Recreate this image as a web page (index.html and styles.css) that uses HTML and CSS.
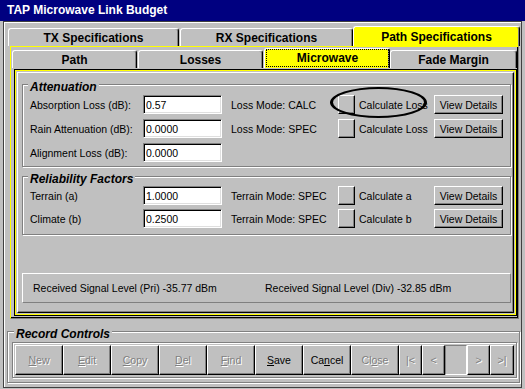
FILE: index.html
```html
<!DOCTYPE html>
<html lang="en">
<head>
  <meta charset="UTF-8" />
  <title>TAP Microwave Link Budget</title>
  <link rel="stylesheet" href="styles.css">
</head>
<body>
  <div class="titlebar">TAP Microwave Link Budget</div>

  <div class="window">
    <div class="tabs outer-tabs">
      <div class="tab tab-tx">TX Specifications</div>
      <div class="tab tab-rx">RX Specifications</div>
      <div class="tab tab-path is-active">Path Specifications</div>
    </div>

    <div class="page">
      <div class="tabs sub-tabs">
        <div class="tab sub-path">Path</div>
        <div class="tab sub-losses">Losses</div>
        <div class="tab sub-mw is-active"><span class="focus">Microwave</span></div>
        <div class="tab sub-fade">Fade Margin</div>
      </div>

      <div class="mw-frame">
        <div class="panel">

          <div class="group group-atten">
            <div class="group-title">Attenuation</div>
            <div class="rows">
              <div class="row">
                <span class="lbl">Absorption Loss (dB):</span>
                <input class="field" type="text" value="0.57">
                <span class="mode">Loss Mode: CALC</span>
                <button class="btn sq" type="button"></button>
                <span class="calc">Calculate Loss</span>
                <button class="btn view" type="button">View Details</button>
                <div class="annot"></div>
              </div>
              <div class="row">
                <span class="lbl">Rain Attenuation (dB):</span>
                <input class="field" type="text" value="0.0000">
                <span class="mode">Loss Mode: SPEC</span>
                <button class="btn sq" type="button"></button>
                <span class="calc">Calculate Loss</span>
                <button class="btn view" type="button">View Details</button>
              </div>
              <div class="row">
                <span class="lbl">Alignment Loss (dB):</span>
                <input class="field" type="text" value="0.0000">
              </div>
            </div>
          </div>

          <div class="group group-rel">
            <div class="group-title">Reliability Factors</div>
            <div class="rows">
              <div class="row">
                <span class="lbl">Terrain (a)</span>
                <input class="field" type="text" value="1.0000">
                <span class="mode">Terrain Mode: SPEC</span>
                <button class="btn sq" type="button"></button>
                <span class="calc">Calculate a</span>
                <button class="btn view" type="button">View Details</button>
              </div>
              <div class="row">
                <span class="lbl">Climate (b)</span>
                <input class="field" type="text" value="0.2500">
                <span class="mode">Terrain Mode: SPEC</span>
                <button class="btn sq" type="button"></button>
                <span class="calc">Calculate b</span>
                <button class="btn view" type="button">View Details</button>
              </div>
            </div>
          </div>

          <div class="signal">
            <span>Received Signal Level (Pri) -35.77 dBm</span>
            <span>Received Signal Level (Div) -32.85 dBm</span>
          </div>

        </div>
      </div>
    </div>

    <div class="group record">
      <div class="group-title">Record Controls</div>
      <div class="nav-box">
        <button class="btn off" type="button"><u>N</u>ew</button>
        <button class="btn off" type="button"><u>E</u>dit</button>
        <button class="btn off" type="button"><u>C</u>opy</button>
        <button class="btn off" type="button"><u>D</u>el</button>
        <button class="btn off" type="button"><u>F</u>ind</button>
        <button class="btn" type="button"><u>S</u>ave</button>
        <button class="btn" type="button">Ca<u>n</u>cel</button>
        <button class="btn off" type="button">Cl<u>o</u>se</button>
        <button class="btn off nav" type="button">|&lt;</button>
        <button class="btn off nav" type="button">&lt;</button>
        <div class="blank"></div>
        <button class="btn off nav" type="button">&gt;</button>
        <button class="btn off nav last" type="button">&gt;|</button>
      </div>
    </div>
  </div>
</body>
</html>
```

FILE: styles.css
```css
body {
  margin: 0;
  width: 525px;
  height: 389px;
  overflow: hidden;
  background: #c0c0c0;
  font-family: "Liberation Sans", Arial, sans-serif;
  font-size: 10.5px;
  color: #000;
}

.titlebar {
  height: 21px;
  line-height: 21px;
  padding-left: 7px;
  background: #000080;
  color: #fff;
  font-weight: bold;
  font-size: 12px;
}

.window {
  box-sizing: border-box;
  height: 367px;
  margin: 0 3px;
  padding: 4px 1px 0 3px;
  border: 1px solid #404040;
  box-shadow: inset 1px 1px #fff;
}

/* tabs */
.tabs {
  display: flex;
  align-items: flex-end;
}

.outer-tabs {
  height: 20px;
  margin-left: 1px;
}

.tab {
  box-sizing: border-box;
  display: flex;
  align-items: center;
  justify-content: center;
  height: 18px;
  background: #c0c0c0;
  border: 1px solid #fff;
  border-right-color: #000;
  border-bottom: 0;
  border-radius: 3px 3px 0 0;
  box-shadow: inset -1px 0 #808080;
  font-weight: bold;
  font-size: 12px;
}

.tab.is-active {
  height: 20px;
  background: #ff0;
}

.tab-tx { width: 171px; margin-right: 1px; }
.tab-rx { width: 173px; }
.tab-path { width: 167px; }

.page {
  box-sizing: border-box;
  width: 509px;
  height: 273px;
  margin-left: 3px;
  padding: 1px 0 0 1px;
  border: 1px solid #808080;
  border-left-color: #ff0;
  border-top-color: #ff0;
  box-shadow: inset -1px -1px #000;
}

.sub-tabs {
  height: 20px;
}

.sub-path,
.sub-losses { width: 125px; margin-right: 1px; }
.sub-mw { width: 126px; align-items: stretch; }
.sub-fade { width: 127px; }

.sub-mw .focus {
  flex: 1;
  display: flex;
  align-items: center;
  justify-content: center;
  margin: 0 0 1px 1px;
  border: 1px dotted #000;
}

.mw-frame {
  box-sizing: border-box;
  width: 503px;
  height: 247px;
  margin: 1px 0 0 2px;
  padding: 2px;
  border: 1px solid #000;
  box-shadow: inset 0 0 0 1px #ff0;
}

.panel {
  box-sizing: border-box;
  height: 241px;
  padding: 11px 2px 0 4px;
  border: 1px solid;
  border-color: #fff #000 #000 #fff;
  box-shadow: inset -1px -1px #808080;
}

/* group boxes */
.group {
  box-sizing: border-box;
  border: 1px solid #808080;
  box-shadow: inset 1px 1px #fff, 1px 1px #fff;
}

.group-title {
  width: max-content;
  margin: -5px 0 0 5px;
  padding: 0 2px;
  background: #c0c0c0;
  font-weight: bold;
  font-style: italic;
  font-size: 12px;
  line-height: 14px;
}

.rows {
  display: flex;
  flex-direction: column;
}

.group-atten .rows {
  gap: 5px;
  padding: 1px 0 4px 7px;
}

.group-rel {
  margin-top: 9px;
}

.group-rel .rows {
  gap: 4px;
  padding: 0 0 6px 7px;
}

.row {
  position: relative;
  display: flex;
  align-items: center;
  height: 19px;
}

.lbl { width: 113px; }

.field {
  box-sizing: border-box;
  width: 79px;
  height: 19px;
  margin: 0;
  padding: 0 2px;
  border: 1px solid;
  border-color: #808080 #fff #fff #808080;
  box-shadow: inset 1px 1px #000, inset -1px -1px #dfdfdf;
  background: #fff;
  font: inherit;
  color: #000;
  outline: none;
}

.mode {
  width: 107px;
  margin-left: 9px;
  box-sizing: border-box;
}

.calc {
  width: 75px;
  margin-left: 4px;
  white-space: nowrap;
}

.btn {
  box-sizing: border-box;
  margin: 0;
  padding: 0;
  border: 1px solid;
  border-color: #fff #000 #000 #fff;
  box-shadow: inset -1px -1px #808080;
  background: #c0c0c0;
  font: inherit;
  color: #000;
}

.btn u { text-underline-offset: 1px; }

.btn.off {
  color: #808080;
  text-shadow: 1px 1px #fff;
}

.sq { width: 17px; height: 19px; }
.view { width: 69px; height: 19px; }

/* hand drawn ring around the first calculate button */
.annot {
  position: absolute;
  left: 300px;
  top: -8px;
  box-sizing: border-box;
  width: 97px;
  height: 31px;
  border: 3px solid #000;
  border-top-width: 2px;
  border-bottom-width: 2px;
  border-radius: 50%;
}

.signal {
  box-sizing: border-box;
  display: flex;
  align-items: center;
  height: 30px;
  margin-top: 38px;
  padding-left: 10px;
  border: 1px solid;
  border-color: #fff #808080 #808080 #fff;
}

.signal span:first-child { width: 232px; }

/* record controls */
.record {
  height: 52px;
  margin-top: 12px;
}

.record .group-title { margin-left: 6px; }

.nav-box {
  box-sizing: border-box;
  display: flex;
  width: 505px;
  height: 36px;
  margin: 1px 0 0 4px;
  padding: 2px;
  border: 1px solid #808080;
  box-shadow: inset 1px 1px #fff, 1px 1px #fff;
}

.nav-box .btn {
  width: 48px;
  height: 30px;
}

.nav-box .nav { width: 23px; }
.nav-box .last { width: 24px; }

.blank {
  box-sizing: border-box;
  width: 22px;
  height: 30px;
  border: 1px solid;
  border-color: #808080 #fff #fff #808080;
}
```
